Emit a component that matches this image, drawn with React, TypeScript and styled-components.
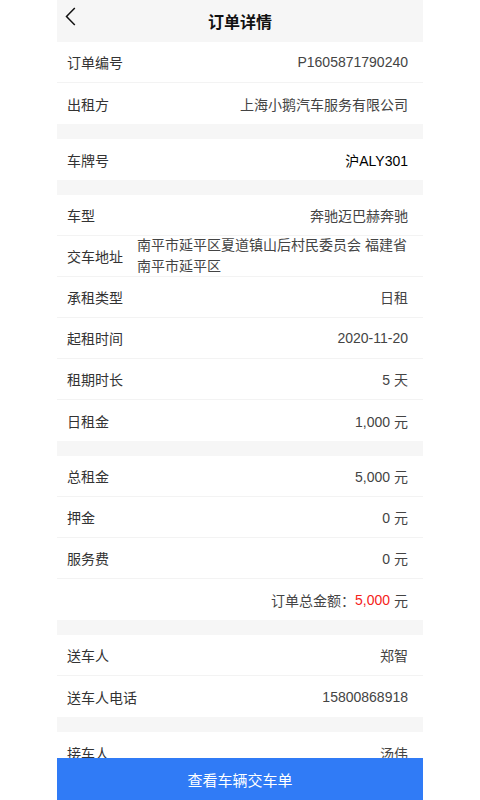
import React from "react";
import styled, { createGlobalStyle } from "styled-components";

const Global = createGlobalStyle`
  html, body { margin: 0; padding: 0; background: #ffffff; }
  body { font-family: "Liberation Sans", "Noto Sans CJK SC", sans-serif; }
  * { box-sizing: border-box; }
`;

const Page = styled.div`
  width: 366px;
  margin: 0 auto;
  min-height: 800px;
  background: #f6f6f6;
  padding-bottom: 42px;
`;

const Header = styled.div`
  height: 42px;
  background: #f6f6f6;
  position: relative;
  display: flex;
  align-items: center;
  justify-content: center;
`;

const Back = styled.div`
  position: absolute;
  left: 8px;
  top: 7px;
  width: 11px;
  height: 19px;
  display: flex;
`;

const Title = styled.div`
  font-size: 16px;
  font-weight: bold;
  color: #111;
`;

const Section = styled.div<{ $gap?: boolean }>`
  background: #fff;
  margin-top: ${(p) => (p.$gap ? "15px" : "0")};
`;

const Row = styled.div<{ $last?: boolean }>`
  height: 41px;
  display: flex;
  align-items: center;
  justify-content: space-between;
  padding: 0 15px 0 10px;
  border-bottom: ${(p) => (p.$last ? "none" : "1px solid #f3f3f3")};
  font-size: 14px;
  color: #333;
`;

const Label = styled.span`
  color: #333;
  white-space: nowrap;
`;

const Value = styled.span<{ $dark?: boolean }>`
  color: ${(p) => (p.$dark ? "#000" : "#444")};
`;

const TallRow = styled.div`
  height: 41px;
  display: flex;
  align-items: center;
  padding: 0 15px 0 10px;
  border-bottom: 1px solid #f3f3f3;
  font-size: 14px;
`;

const Address = styled.span`
  margin-left: 14px;
  line-height: 21px;
  margin-top: -1px;
  color: #444;
`;

const TotalRow = styled.div`
  height: 41px;
  display: flex;
  align-items: center;
  justify-content: flex-end;
  padding: 0 15px;
  font-size: 14px;
  color: #444;
`;

const Red = styled.span`
  color: #f5221b;
  margin-right: 4px;
`;

const Button = styled.div`
  position: fixed;
  bottom: 0;
  left: 50%;
  transform: translateX(-50%);
  width: 366px;
  height: 42px;
  background: #307bf6;
  color: #fff;
  font-size: 15px;
  display: flex;
  align-items: center;
  justify-content: center;
`;

type Item = [string, string, boolean?];

const Group = ({ items, gap }: { items: Item[]; gap?: boolean }) => (
  <Section $gap={gap}>
    {items.map(([l, v, dark], i) => (
      <Row key={l} $last={i === items.length - 1}>
        <Label>{l}</Label>
        <Value $dark={dark}>{v}</Value>
      </Row>
    ))}
  </Section>
);

export default function App() {
  return (
    <>
      <Global />
      <Page>
        <Header>
          <Back>
            <svg width="11" height="19" viewBox="0 0 11 19">
              <path d="M9.8 1 L1.5 9.5 L9.8 18" fill="none" stroke="#111" strokeWidth="1.5" />
            </svg>
          </Back>
          <Title>订单详情</Title>
        </Header>
        <Group
          items={[
            ["订单编号", "P1605871790240"],
            ["出租方", "上海小鹅汽车服务有限公司"],
          ]}
        />
        <Group gap items={[["车牌号", "沪ALY301", true]]} />
        <Section $gap>
          <Row>
            <Label>车型</Label>
            <Value>奔驰迈巴赫奔驰</Value>
          </Row>
          <TallRow>
            <Label>交车地址</Label>
            <Address>南平市延平区夏道镇山后村民委员会 福建省南平市延平区</Address>
          </TallRow>
          <Row>
            <Label>承租类型</Label>
            <Value>日租</Value>
          </Row>
          <Row>
            <Label>起租时间</Label>
            <Value>2020-11-20</Value>
          </Row>
          <Row>
            <Label>租期时长</Label>
            <Value>5 天</Value>
          </Row>
          <Row $last>
            <Label>日租金</Label>
            <Value>1,000 元</Value>
          </Row>
        </Section>
        <Section $gap>
          <Row>
            <Label>总租金</Label>
            <Value>5,000 元</Value>
          </Row>
          <Row>
            <Label>押金</Label>
            <Value>0 元</Value>
          </Row>
          <Row>
            <Label>服务费</Label>
            <Value>0 元</Value>
          </Row>
          <TotalRow>
            订单总金额：<Red>5,000</Red>元
          </TotalRow>
        </Section>
        <Group
          gap
          items={[
            ["送车人", "郑智"],
            ["送车人电话", "15800868918"],
          ]}
        />
        <Group gap items={[["接车人", "汤伟"]]} />
      </Page>
      <Button>查看车辆交车单</Button>
    </>
  );
}
